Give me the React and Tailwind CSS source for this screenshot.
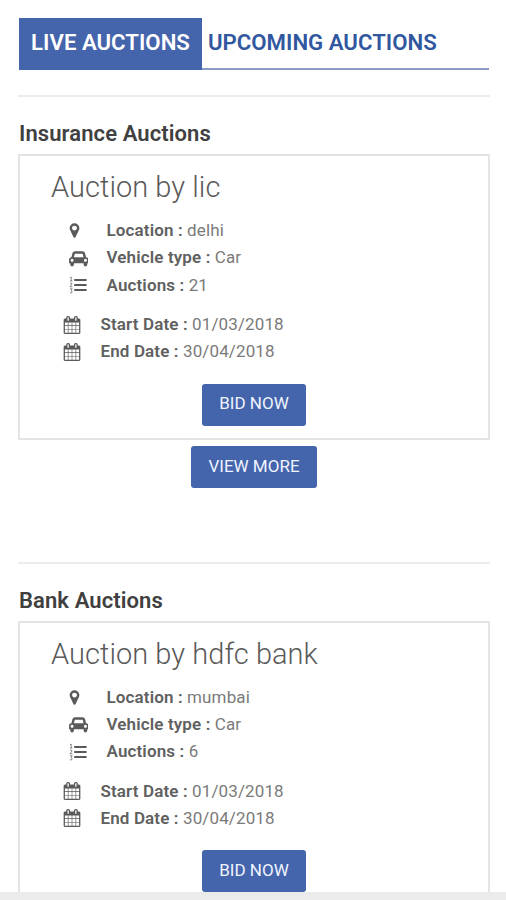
import React from 'react'

const sections = [
  { title: 'Insurance Auctions', name: 'Auction by lic', location: 'delhi', type: 'Car', count: 21, hasMore: true },
  { title: 'Bank Auctions', name: 'Auction by hdfc bank', location: 'mumbai', type: 'Car', count: 6 },
]

const MarkerIcon = () => (
  <svg className="h-[17px] w-[17px] -ml-[3px]" viewBox="0 0 1792 1792" fill="currentColor">
    <path d="M1152 640q0-106-75-181t-181-75-181 75-75 181 75 181 181 75 181-75 75-181zm256 0q0 109-33 179l-364 774q-16 33-47.5 52t-67.5 19-67.5-19-46.5-52l-365-774q-33-70-33-179 0-212 150-362t362-150 362 150 150 362z" />
  </svg>
)

const CarIcon = () => (
  <svg className="h-[17px] w-[19.5px]" viewBox="0 0 2048 1792" fill="currentColor">
    <path d="M480 1088q0-66-47-113t-113-47-113 47-47 113 47 113 113 47 113-47 47-113zm36-320h1016l-89-357q-2-8-14-17.5t-21-9.5h-768q-9 0-21 9.5t-14 17.5zm1372 320q0-66-47-113t-113-47-113 47-47 113 47 113 113 47 113-47 47-113zm160-96v384q0 14-9 23t-23 9h-96v128q0 80-56 136t-136 56-136-56-56-136v-128h-1024v128q0 80-56 136t-136 56-136-56-56-136v-128h-96q-14 0-23-9t-9-23v-384q0-93 65.5-158.5t158.5-65.5h28l105-419q23-94 104-157.5t179-63.5h768q98 0 179 63.5t104 157.5l105 419h28q93 0 158.5 65.5t65.5 158.5z" />
  </svg>
)

const ListIcon = () => (
  <svg className="h-[18px] w-[18px]" viewBox="0 0 18 18" fill="none" stroke="currentColor">
    <path d="M5.2 4H17.6M5.2 9H17.6M5.2 14H17.6" strokeWidth="1.9" />
    <path
      d="M1 1.8L2.2 1V5M1 5H3.4M1 7.4Q3.2 6.3 3 8L1 10.8H3.4M1 12.8H3.2L2 14.6Q3.6 14.8 3 16.4Q2.2 17.4 0.9 16.8"
      strokeWidth="0.7"
    />
  </svg>
)

const CalendarIcon = () => (
  <svg className="h-[18px] w-[18px]" viewBox="0 0 1792 1792" fill="currentColor">
    <path d="M192 1664h288v-288h-288v288zm352 0h320v-288h-320v288zm-352-352h288v-320h-288v320zm352 0h320v-320h-320v320zm-352-384h288v-288h-288v288zm736 736h320v-288h-320v288zm-384-736h320v-288h-320v288zm768 736h288v-288h-288v288zm-384-352h320v-320h-320v320zm-352-864v-288q0-13-9.5-22.5t-22.5-9.5h-64q-13 0-22.5 9.5t-9.5 22.5v288q0 13 9.5 22.5t22.5 9.5h64q13 0 22.5-9.5t9.5-22.5zm736 864h288v-320h-288v320zm-384-384h320v-288h-320v288zm384 0h288v-288h-288v288zm32-480v-288q0-13-9.5-22.5t-22.5-9.5h-64q-13 0-22.5 9.5t-9.5 22.5v288q0 13 9.5 22.5t22.5 9.5h64q13 0 22.5-9.5t9.5-22.5zm384-64v1280q0 52-38 90t-90 38h-1408q-52 0-90-38t-38-90v-1280q0-52 38-90t90-38h128v-96q0-66 47-113t113-47h64q66 0 113 47t47 113v96h384v-96q0-66 47-113t113-47h64q66 0 113 47t47 113v96h128q52 0 90 38t38 90z" />
  </svg>
)

const Row = ({ icon, label, value }) => (
  <div className="flex h-[27.2px] items-center tracking-[0.13px] whitespace-nowrap">
    <span className="w-[38px] shrink-0 text-[#5a5a5a]">{icon}</span>
    <p>
      <b className="font-semibold text-[#606060]">{label} :</b> {value}
    </p>
  </div>
)

const Button = ({ children, className }) => (
  <button className={`block rounded-[3px] bg-[#4464ab] pb-px text-[17px] text-[#f0f4ff] ${className}`}>
    {children}
  </button>
)

const Section = ({ title, name, location, type, count, hasMore }) => (
  <section className="h-[466.5px] shrink-0 border-t-2 border-[#ececec]">
    <h2 className="mt-[21.3px] ml-px h-[36px] text-[22px] leading-[32px] font-semibold tracking-[0.1px] text-[#404040]">
      {title}
    </h2>
    <div className="h-[286px] border-2 border-[#e4e4e4] pt-[12px]">
      <h3 className="ml-[31px] h-[49px] text-[29px] leading-[38px] font-light tracking-[0.05px] text-[#5a5a5a]">
        {name}
      </h3>
      <div className="ml-[48.5px]">
        <Row icon={<MarkerIcon />} label="Location" value={location} />
        <Row icon={<CarIcon />} label="Vehicle type" value={type} />
        <Row icon={<ListIcon />} label="Auctions" value={count} />
      </div>
      <div className="mt-[12.3px] ml-[42.5px]">
        <Row icon={<CalendarIcon />} label="Start Date" value="01/03/2018" />
        <Row icon={<CalendarIcon />} label="End Date" value="30/04/2018" />
      </div>
      <Button className="mx-auto mt-[18.2px] h-[42px] w-[104px]">BID NOW</Button>
    </div>
    {hasMore && <Button className="mx-auto mt-[5.5px] h-[42px] w-[126px]">VIEW MORE</Button>}
  </section>
)

const App = () => {
  return (
    <div className="flex h-[900px] flex-col bg-white font-[Roboto,sans-serif] text-[17px] text-[#7a7a7a]">
      <main className="flex min-h-0 flex-1 flex-col overflow-hidden px-[18px] pt-[18px]">
        <nav className="ml-px flex h-[52px] w-[470px] shrink-0 border-b-2 border-[#8d9cc4] text-[22.2px] font-semibold">
          <a className="-mb-[2px] flex h-[52px] w-[183px] items-center justify-center bg-[#4464ab] pb-[2px] text-white">
            LIVE AUCTIONS
          </a>
          <a className="ml-[6px] flex items-center text-[#31579f]">UPCOMING AUCTIONS</a>
        </nav>
        <div className="mt-[25px] flex w-[472px] flex-col">
          {sections.map((s) => (
            <Section key={s.title} {...s} />
          ))}
        </div>
      </main>
      <footer className="h-[8px] shrink-0 bg-[#ebebeb]" />
    </div>
  )
}

export default App
